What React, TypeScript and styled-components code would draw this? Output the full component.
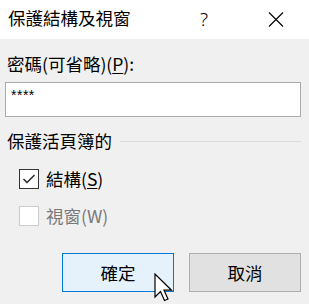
import React from "react";
import styled, { createGlobalStyle } from "styled-components";

const Global = createGlobalStyle`
  html, body { margin: 0; padding: 0; background: #f0f0f0; }
  body { font-family: "Noto Sans CJK TC", "Noto Sans", sans-serif; color: #000; }
`;

const Dialog = styled.div`
  width: 309px;
  height: 304px;
  background: #f0f0f0;
  position: relative;
  overflow: hidden;
`;

const TitleBar = styled.div`
  height: 39px;
  background: #fff;
  display: flex;
  align-items: center;
  padding-left: 8px;
  box-sizing: border-box;
`;

const Title = styled.div`
  font-size: 17.5px;
  line-height: 20px;
  flex: 1;
  margin-top: -3px;
`;

const Help = styled.div`
  font-family: "Noto Sans", sans-serif;
  font-weight: 300;
  font-size: 19px;
  line-height: 20px;
  width: 12px;
  margin-right: 56px;
  margin-top: -1px;
`;

const CloseBox = styled.div`
  width: 16px;
  height: 15px;
  margin-right: 25px;
  display: flex;
`;

const Body = styled.div`
  padding: 15px 8px 0 7px;
  display: flex;
  flex-direction: column;
`;

const Label = styled.div`
  font-size: 17.5px;
  line-height: 20px;
  & u { text-underline-offset: 2px; }
`;

const Input = styled.div`
  margin: 8px 0 0 -2px;
  height: 35px;
  box-sizing: border-box;
  border: 1px solid #ababab;
  background: #fff;
  padding: 4px 0 0 5px;
  font-family: "Liberation Sans", sans-serif;
  font-size: 14px;
  line-height: 16px;
  letter-spacing: 0.5px;
`;

const GroupHead = styled.div`
  margin-top: 14px;
  display: flex;
  align-items: center;
  gap: 8px;
  font-size: 17.5px;
  line-height: 20px;
`;

const Rule = styled.div`
  flex: 1;
  height: 1px;
  background: #dcdcdc;
  margin-top: 1px;
`;

const CheckRow = styled.div<{ $top: number; $disabled?: boolean }>`
  margin-top: ${(p) => p.$top}px;
  padding-left: 12px;
  display: flex;
  align-items: center;
  gap: 7px;
  height: 20px;
  font-size: 17.5px;
  line-height: 20px;
  color: ${(p) => (p.$disabled ? "#7a7a7a" : "#000")};
  & u { text-underline-offset: 2px; }
`;

const Box = styled.div<{ $disabled?: boolean }>`
  width: 20px;
  height: 20px;
  box-sizing: border-box;
  border: ${(p) => (p.$disabled ? "1px solid #cccccc" : "1.5px solid #333333")};
  background: #fff;
  display: flex;
  align-items: center;
  justify-content: center;
`;

const Buttons = styled.div`
  margin-top: 27px;
  display: flex;
  justify-content: flex-end;
  gap: 15px;
`;

const Button = styled.div<{ $primary?: boolean }>`
  width: 112px;
  height: 39px;
  box-sizing: border-box;
  border: 1px solid ${(p) => (p.$primary ? "#0078d7" : "#adadad")};
  background: ${(p) => (p.$primary ? "#e5f1fb" : "#e1e1e1")};
  display: flex;
  align-items: center;
  justify-content: center;
  font-size: 17.5px;
  line-height: 20px;
`;

const Cursor = styled.svg`
  position: absolute;
  left: 154px;
  top: 273px;
`;

export default function App() {
  return (
    <Dialog>
      <Global />
      <TitleBar>
        <Title>保護結構及視窗</Title>
        <Help>?</Help>
        <CloseBox>
          <svg width="16" height="15" viewBox="0 0 16 15">
            <path d="M1 0.5 L15 14.5 M15 0.5 L1 14.5" stroke="#000" strokeWidth="1.1" fill="none" />
          </svg>
        </CloseBox>
      </TitleBar>
      <Body>
        <Label>
          密碼(可省略)(<u>P</u>):
        </Label>
        <Input>****</Input>
        <GroupHead>
          保護活頁簿的
          <Rule />
        </GroupHead>
        <CheckRow $top={18}>
          <Box>
            <svg width="14" height="12" viewBox="0 0 14 12">
              <path d="M1.5 6 L5 9.5 L12.5 2" stroke="#222" strokeWidth="1.4" fill="none" />
            </svg>
          </Box>
          <span>
            結構(<u>S</u>)
          </span>
        </CheckRow>
        <CheckRow $top={17} $disabled>
          <Box $disabled />
          <span>視窗(W)</span>
        </CheckRow>
        <Buttons>
          <Button $primary>確定</Button>
          <Button>取消</Button>
        </Buttons>
      </Body>
      <Cursor width="19" height="29" viewBox="0 0 19 29">
        <path
          d="M1 1 L1 24 L6.5 18.5 L10.5 27.5 L14 26 L10 17.2 L17.5 17.2 Z"
          fill="#fff"
          stroke="#000"
          strokeWidth="1.2"
          strokeLinejoin="miter"
        />
      </Cursor>
    </Dialog>
  );
}
